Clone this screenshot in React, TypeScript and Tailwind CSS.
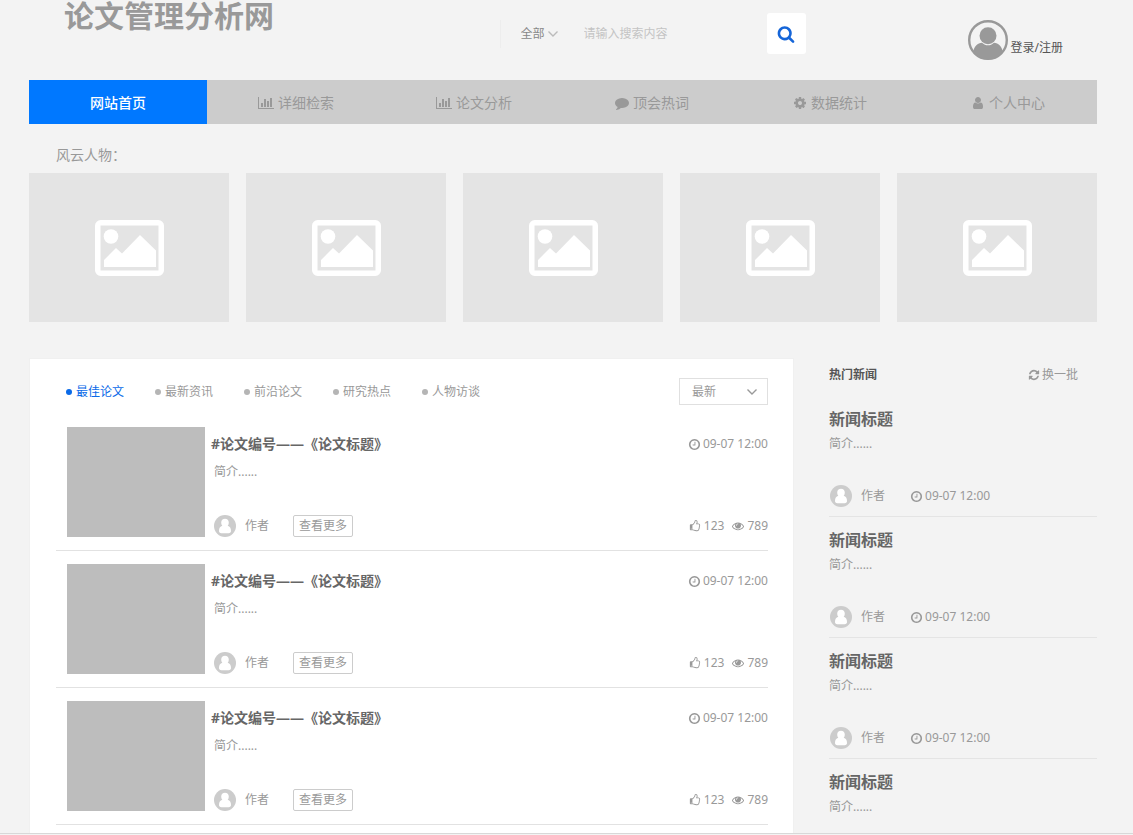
import React from 'react'

type IconProps = { className?: string }

const glyphs = {
    chart: 'M640 896v512h-256v-512h256zm384-512v1024h-256v-1024h256zm1024 1152v128h-2048v-1536h128v1408h1920zm-640-896v768h-256v-768h256zm384-384v1152h-256v-1152h256z',
    comment:
        'M1792 896q0 174-120 321.5t-326 233-450 85.5q-70 0-145-8-198 175-460 242-49 14-114 22-17 2-30.5-9t-17.5-29v-1q-3-4-.5-12t2-10 4.5-9.5l6-9 7-8.5 8-9q7-8 31-34.5t34.5-38 31-39.5 32.5-51 27-59 26-76q-157-89-247.5-220t-90.5-281q0-130 71-248.5t191-204.5 286-136.5 348-50.5q244 0 450 85.5t326 233 120 321.5z',
    cog: 'M1152 896q0-106-75-181t-181-75-181 75-75 181 75 181 181 75 181-75 75-181zm512-109v222q0 12-8 23t-20 13l-185 28q-19 54-39 91 35 50 107 138 10 12 10 25t-9 23q-27 37-99 108t-94 71q-12 0-26-9l-138-108q-44 23-91 38-16 136-29 186-7 28-36 28h-222q-14 0-24.5-8.5t-11.5-21.5l-28-184q-49-16-90-37l-141 107q-10 9-25 9-14 0-25-11-126-114-165-168-7-10-7-23 0-12 8-23 15-21 51-66.5t54-70.5q-27-50-41-99l-183-27q-13-2-21-12.5t-8-23.5v-222q0-12 8-23t19-13l186-28q14-46 39-92-40-57-107-138-10-12-10-24 0-10 9-23 26-36 98.5-107.5t94.5-71.5q13 0 26 10l138 107q44-23 91-38 16-136 29-186 7-28 36-28h222q14 0 24.5 8.5t11.5 21.5l28 184q49 16 90 37l142-107q9-9 24-9 13 0 25 10 129 119 165 170 7 8 7 22 0 12-8 23-15 21-51 66.5t-54 70.5q26 50 41 98l183 28q13 2 21 12.5t8 23.5z',
    user: 'M1536 1399q0 109-62.5 187t-150.5 78h-854q-88 0-150.5-78t-62.5-187q0-85 8.5-160.5t31.5-152 58.5-131 94-89 134.5-34.5q131 128 313 128t313-128q76 0 134.5 34.5t94 89 58.5 131 31.5 152 8.5 160.5zm-256-887q0 159-112.5 271.5t-271.5 112.5-271.5-112.5-112.5-271.5 112.5-271.5 271.5-112.5 271.5 112.5 112.5 271.5z',
    refresh:
        'M1639 1056q0 5-1 7-64 268-268 434.5t-478 166.5q-146 0-282.5-55t-243.5-157l-129 129q-19 19-45 19t-45-19-19-45v-448q0-26 19-45t45-19h448q26 0 45 19t19 45-19 45l-137 137q71 66 161 102t187 36q134 0 250-65t186-179q11-17 53-117 8-23 30-23h192q13 0 22.5 9.5t9.5 22.5zm25-800v448q0 26-19 45t-45 19h-448q-26 0-45-19t-19-45 19-45l138-138q-148-137-349-137-134 0-250 65t-186 179q-11 17-53 117-8 23-30 23h-199q-13 0-22.5-9.5t-9.5-22.5v-7q65-268 270-434.5t480-166.5q146 0 284 55.5t245 156.5l130-129q19-19 45-19t45 19 19 45z',
    clock: 'M1024 544v448q0 14-9 23t-23 9h-320q-14 0-23-9t-9-23v-64q0-14 9-23t23-9h224v-352q0-14 9-23t23-9h64q14 0 23 9t9 23zm416 352q0-148-73-273t-198-198-273-73-273 73-198 198-73 273 73 273 198 198 273 73 273-73 198-198 73-273zm224 0q0 209-103 385.5t-279.5 279.5-385.5 103-385.5-103-279.5-279.5-103-385.5 103-385.5 279.5-279.5 385.5-103 385.5 103 279.5 279.5 103 385.5z',
    thumb: 'M384 1344q0-26-19-45t-45-19-45 19-19 45 19 45 45 19 45-19 19-45zm1152-576q0-51-39-89.5t-89-38.5h-352q0-58 48-159.5t48-160.5q0-98-32-145t-128-47q-26 26-38 85t-30.5 125.5-59.5 109.5q-22 23-77 91-4 5-23 30t-31.5 41-34.5 42.5-40 44-38.5 35.5-40 27-35.5 9h-32v640h32q13 0 31.5 3t33 6.5 38 11 35 11.5 35.5 12.5 29 10.5q211 73 342 73h121q192 0 192-167 0-26-5-56 30-16 47.5-52.5t17.5-73.5-18-69q53-50 53-119 0-25-10-55.5t-25-47.5q32-1 53.5-47t21.5-81zm128-1q0 89-49 163 9 33 9 69 0 77-38 144 3 21 3 43 0 101-60 178 1 139-85 219.5t-227 80.5h-129q-96 0-189.5-22.5t-216.5-65.5q-116-40-138-40h-288q-53 0-90.5-37.5t-37.5-90.5v-640q0-53 37.5-90.5t90.5-37.5h274q36-24 137-155 58-75 107-128 24-25 35.5-85.5t30.5-126.5 62-108q39-37 90-37 84 0 151 32.5t102 101.5 35 186q0 93-48 192h176q104 0 180 76t76 179z',
    eye: 'M1664 960q-152-236-381-353 61 104 61 225 0 185-131.5 316.5t-316.5 131.5-316.5-131.5-131.5-316.5q0-121 61-225-229 117-381 353 133 205 333.5 326.5t434.5 121.5 434.5-121.5 333.5-326.5zm-720-384q0-20-14-34t-34-14q-125 0-214.5 89.5t-89.5 214.5q0 20 14 34t34 14 34-14 14-34q0-86 61-147t147-61q20 0 34-14t14-34zm848 384q0 34-20 69-140 230-376.5 368.5t-499.5 138.5-499.5-139-376.5-368q-20-35-20-69t20-69q140-229 376.5-368t499.5-139 499.5 139 376.5 368q20 35 20 69z',
    search: 'M1216 832q0-185-131.5-316.5t-316.5-131.5-316.5 131.5-131.5 316.5 131.5 316.5 316.5 131.5 316.5-131.5 131.5-316.5zm512 832q0 52-38 90t-90 38q-54 0-90-38l-343-342q-179 124-399 124-143 0-273.5-55.5t-225-150-150-225-55.5-273.5 55.5-273.5 150-225 225-150 273.5-55.5 273.5 55.5 225 150 150 225 55.5 273.5q0 220-124 399l343 343q37 37 37 90z',
}

function Glyph({
    name,
    className = 'h-3 w-3',
}: IconProps & { name: keyof typeof glyphs }) {
    return (
        <svg
            viewBox={name === 'chart' ? '0 0 2048 1792' : '0 0 1792 1792'}
            fill="currentColor"
            aria-hidden="true"
            className={`shrink-0 ${className}`}
        >
            <path d={glyphs[name]} />
        </svg>
    )
}

function Chevron({ className }: IconProps) {
    return (
        <svg
            viewBox="0 0 12 8"
            fill="none"
            stroke="currentColor"
            strokeWidth="1.4"
            aria-hidden="true"
            className={className}
        >
            <path d="M1.5 1.5 6 6l4.5-4.5" />
        </svg>
    )
}

function Picture() {
    return (
        <svg
            viewBox="0 0 69 56"
            aria-hidden="true"
            className="h-14 w-[69px] text-white"
        >
            <rect
                x="2.75"
                y="2.75"
                width="63.5"
                height="50.5"
                rx="3"
                fill="none"
                stroke="currentColor"
                strokeWidth="5.5"
            />
            <circle cx="16" cy="16.5" r="7.3" fill="currentColor" />
            <path
                d="M9 40 21 28l6 5.500L45 15l16 15.500V47H9z"
                fill="currentColor"
            />
        </svg>
    )
}

function LoginAvatar() {
    return (
        <svg
            viewBox="0 0 40 40"
            aria-hidden="true"
            className="h-10 w-10 text-[#999]"
        >
            <circle
                cx="20"
                cy="20"
                r="18.8"
                fill="none"
                stroke="currentColor"
                strokeWidth="2.4"
            />
            <circle cx="20" cy="15.7" r="8.5" fill="currentColor" />
            <path
                d="M5 32c1.500-6 4.500-9 9-9.300 3.500 3.400 8.500 3.400 12 0 4.500.3 7.500 3.300 9 9.300-3 4.500-8.500 7.500-15 7.500S8 36.500 5 32z"
                fill="currentColor"
            />
        </svg>
    )
}

function AuthorAvatar() {
    return (
        <svg viewBox="0 0 22 22" aria-hidden="true" className="h-[22px] w-[22px]">
            <circle cx="11" cy="11" r="11" fill="#ccc" />
            <path
                d="M11 3.800c2.300 0 3.800 1.600 3.800 3.900 0 1.200-.4 2.300-1.100 3.100 2.200.5 3.300 2.400 3.300 5.200 0 1.400-.9 2.200-2.300 2.200H7.300C5.900 18.200 5 17.400 5 16c0-2.800 1.100-4.700 3.300-5.200-.7-.8-1.100-1.900-1.100-3.100 0-2.300 1.500-3.900 3.800-3.900z"
                fill="#fff"
            />
        </svg>
    )
}

const navItems: { label: string; icon?: keyof typeof glyphs }[] = [
    { label: '网站首页' },
    { label: '详细检索', icon: 'chart' },
    { label: '论文分析', icon: 'chart' },
    { label: '顶会热词', icon: 'comment' },
    { label: '数据统计', icon: 'cog' },
    { label: '个人中心', icon: 'user' },
]

const tabs = ['最佳论文', '最新资讯', '前沿论文', '研究热点', '人物访谈']

function Header() {
    return (
        <header className="flex h-20 items-start pl-[35px] pr-[34px]">
            <h1 className="text-[30px] leading-8 font-bold text-[#999]">
                论文管理分析网
            </h1>
            <form
                className="mt-[13px] mr-[162px] ml-auto flex h-[41px] items-center"
                onSubmit={(e) => e.preventDefault()}
            >
                <div className="relative flex h-7 items-center border-l border-[#ededed] pl-5">
                    <select
                        aria-label="搜索范围"
                        className="w-[58px] appearance-none bg-transparent text-[#888] outline-none"
                    >
                        <option>全部</option>
                    </select>
                    <Chevron className="pointer-events-none absolute right-5 h-2 w-3 text-[#bbb]" />
                </div>
                <input
                    type="text"
                    aria-label="搜索内容"
                    placeholder="请输入搜索内容"
                    className="ml-[5px] w-[183px] bg-transparent placeholder:text-[#c4c4c4] outline-none"
                />
                <button
                    type="submit"
                    aria-label="搜索"
                    className="flex h-[41px] w-[39px] items-center justify-center rounded-[3px] bg-white text-[#1565d8]"
                >
                    <Glyph name="search" className="h-[18px] w-[18px]" />
                </button>
            </form>
            <a
                href="#login"
                className="mt-5 flex h-10 items-end gap-[3px] text-[#555]"
            >
                <LoginAvatar />
                <span className="mb-[3px] leading-[18px]">登录/注册</span>
            </a>
        </header>
    )
}

function Nav() {
    return (
        <nav className="grid h-11 grid-cols-6 bg-[#ccc] text-sm">
            {navItems.map(({ label, icon }) => (
                <a
                    key={label}
                    href="#"
                    className={
                        icon
                            ? 'flex items-center justify-center gap-1 pt-0.5 text-[#999]'
                            : 'flex items-center justify-center bg-[#0078ff] pt-0.5 font-medium text-white'
                    }
                >
                    {icon && (
                        <Glyph
                            name={icon}
                            className={
                                icon === 'chart' ? 'h-3.5 w-4' : 'h-3.5 w-3.5'
                            }
                        />
                    )}
                    {label}
                </a>
            ))}
        </nav>
    )
}

function Time() {
    return (
        <span className="flex items-center gap-0.5">
            <Glyph name="clock" className="h-[13px] w-[13px]" />
            <time>09-07 12:00</time>
        </span>
    )
}

function Paper() {
    return (
        <article className="flex gap-1.5 border-b border-[#e2e2e2] py-[13px] pl-[11px]">
            <div className="h-[110px] w-[138px] shrink-0 bg-[#bdbdbd]" />
            <div className="flex flex-1 flex-col">
                <div className="flex items-center justify-between pt-[7px]">
                    <h2 className="text-sm leading-5 font-bold text-[#666]">
                        #论文编号——《论文标题》
                    </h2>
                    <Time />
                </div>
                <p className="mt-[9px] pl-[3px] leading-[18px]">简介......</p>
                <div className="mt-auto flex h-[22px] items-center pl-[3px]">
                    <AuthorAvatar />
                    <span className="ml-[9px]">作者</span>
                    <button
                        type="button"
                        className="ml-6 h-[22px] rounded-[2px] border border-[#ccc] px-[5px] leading-5"
                    >
                        查看更多
                    </button>
                    <span className="ml-auto flex items-center gap-[3px]">
                        <Glyph name="thumb" />
                        123
                    </span>
                    <span className="ml-2 flex items-center gap-[3px]">
                        <Glyph name="eye" />
                        789
                    </span>
                </div>
            </div>
        </article>
    )
}

function Papers() {
    return (
        <section className="flex-1 border border-[#f0f0f0] bg-white pr-[25px] pl-[26px]">
            <div className="flex h-[55px] items-center justify-between pt-2.5 pl-2.5">
                <div className="flex gap-[31px]">
                    {tabs.map((tab, i) => (
                        <button
                            key={tab}
                            type="button"
                            className={
                                i === 0
                                    ? 'flex items-center gap-1 text-[#0a6ae8]'
                                    : 'flex items-center gap-1'
                            }
                        >
                            <span
                                className={
                                    i === 0
                                        ? 'h-1.5 w-1.5 rounded-full bg-[#0a6ae8]'
                                        : 'h-1.5 w-1.5 rounded-full bg-[#b5b5b5]'
                                }
                            />
                            {tab}
                        </button>
                    ))}
                </div>
                <div className="relative flex items-center">
                    <select
                        aria-label="排序"
                        className="h-[27px] w-[89px] appearance-none border border-[#e0e0e0] bg-white pl-3 outline-none"
                    >
                        <option>最新</option>
                    </select>
                    <Chevron className="pointer-events-none absolute right-2.5 h-2 w-3" />
                </div>
            </div>
            <Paper />
            <Paper />
            <Paper />
        </section>
    )
}

function NewsItem({ brief = false }: { brief?: boolean }) {
    return (
        <article className="min-h-[121px] border-b border-[#e4e4e4] pt-[11px] pb-[9px]">
            <h3 className="text-base leading-6 font-bold text-[#666]">
                新闻标题
            </h3>
            <p className="mt-1 leading-[18px]">简介......</p>
            {!brief && (
                <div className="mt-8 flex h-[22px] items-center pl-px">
                    <AuthorAvatar />
                    <span className="mr-[25px] ml-[9px]">作者</span>
                    <Time />
                </div>
            )}
        </article>
    )
}

function News() {
    return (
        <aside className="w-[268px] shrink-0">
            <div className="mb-1 flex h-[34px] items-center justify-between pr-[19px]">
                <h2 className="font-bold text-[#555]">热门新闻</h2>
                <button type="button" className="flex items-center gap-0.5">
                    <Glyph name="refresh" />
                    换一批
                </button>
            </div>
            <NewsItem />
            <NewsItem />
            <NewsItem />
            <NewsItem brief />
        </aside>
    )
}

export default function App() {
    return (
        <div className="flex h-screen flex-col bg-[#f3f3f3] font-['Noto_Sans','Noto_Sans_CJK_SC',sans-serif] text-xs text-[#999]">
            <div className="min-h-0 flex-1 overflow-hidden pr-9 pl-[29px]">
                <Header />
                <Nav />
                <section>
                    <h2 className="pt-[21px] pb-2 pl-[27px] text-sm leading-5">
                        风云人物：
                    </h2>
                    <div className="grid grid-cols-5 gap-[17px]">
                        {[0, 1, 2, 3, 4].map((n) => (
                            <div
                                key={n}
                                className="flex h-[149px] items-center justify-center bg-[#e4e4e4]"
                            >
                                <Picture />
                            </div>
                        ))}
                    </div>
                </section>
                <main className="mt-9 flex gap-[35px]">
                    <Papers />
                    <News />
                </main>
            </div>
            <div className="h-0.5 shrink-0 border-t border-[#d8d8d8]" />
        </div>
    )
}
